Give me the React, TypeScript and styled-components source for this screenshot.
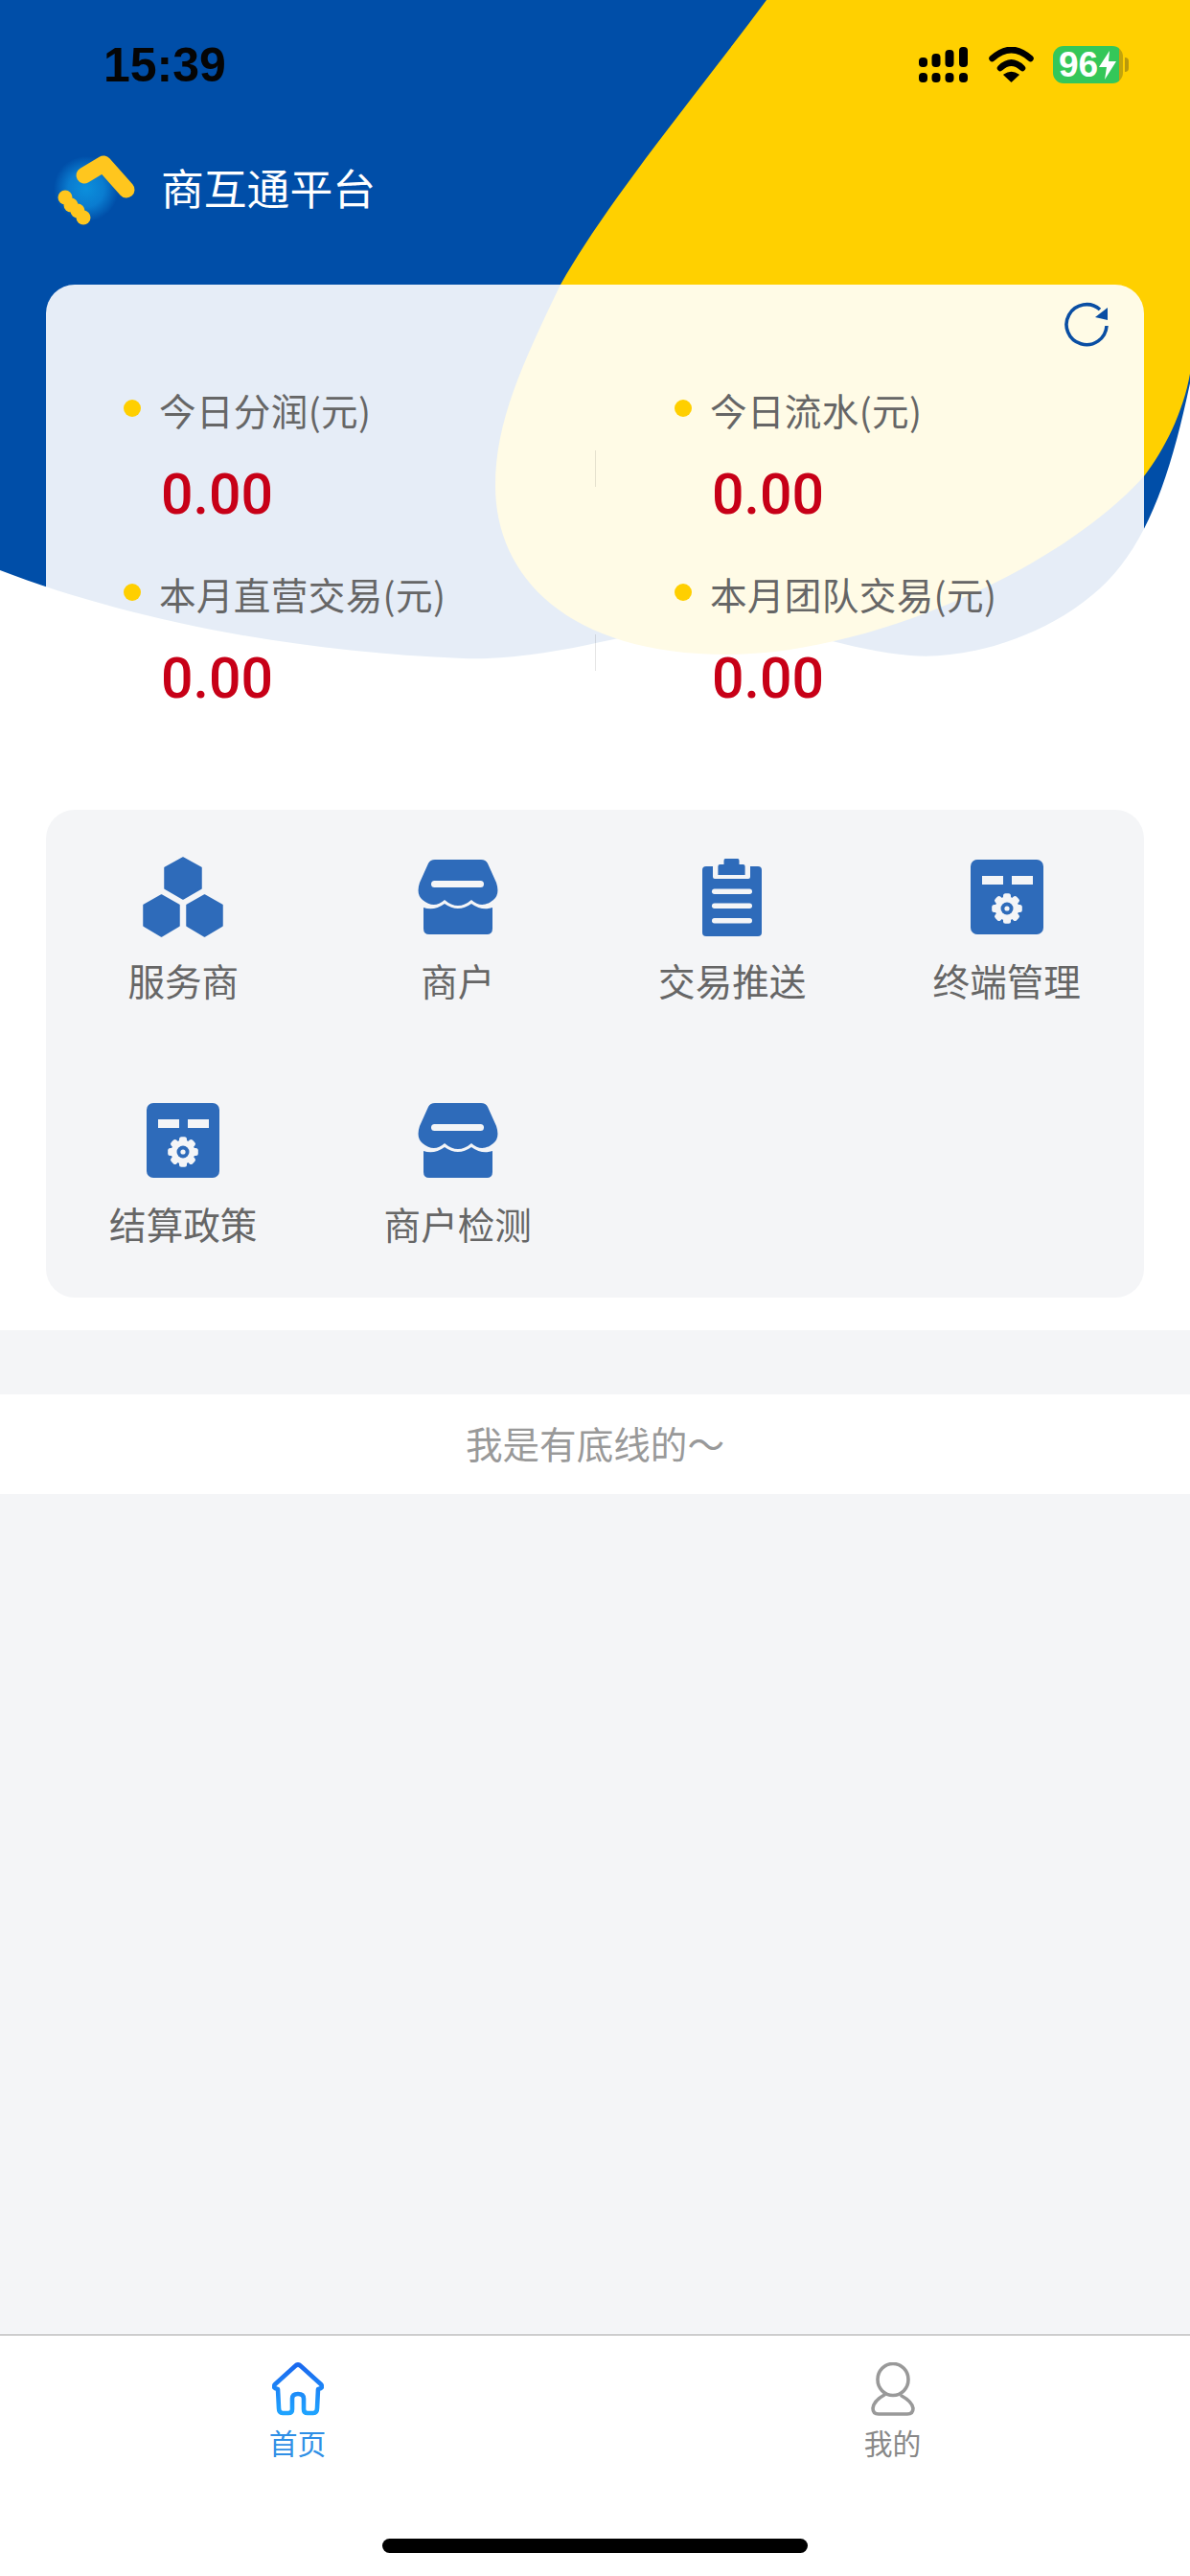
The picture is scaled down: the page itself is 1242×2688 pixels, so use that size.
import React from "react";
import styled, { createGlobalStyle } from "styled-components";

const Global = createGlobalStyle`
  html, body { margin: 0; padding: 0; background: #fff; }
  * { box-sizing: border-box; }
`;

const CJK = `"Noto Sans CJK SC", "Noto Sans", sans-serif`;

const BLUE = "#2e6bba";
const BG = "#f4f5f7";

const Page = styled.div`
  position: relative;
  width: 1242px;
  height: 2688px;
  display: flex;
  flex-direction: column;
  background: ${BG};
  font-family: ${CJK};
  overflow: hidden;
`;

const Hero = styled.section`
  position: relative;
  background: #fff;
  padding-bottom: 34px;
`;

const HeroArt = styled.svg`
  position: absolute;
  left: 0;
  top: 0;
  z-index: 0;
`;

const HeroContent = styled.div`
  position: relative;
  z-index: 1;
  display: flex;
  flex-direction: column;
`;

const StatusBar = styled.div`
  height: 135px;
  display: flex;
  align-items: center;
  padding: 0 70px 0 108px;
`;

const Time = styled.div`
  font-family: "Liberation Sans", Arial, sans-serif;
  font-weight: 700;
  font-size: 50px;
  line-height: 1;
  color: #050505;
  margin-right: auto;
`;

const StatusIcon = styled.svg<{ $gap: number }>`
  display: block;
  margin-right: ${(p) => p.$gap}px;
`;

const Battery = styled.div`
  position: relative;
  width: 73px;
  height: 39px;
  border-radius: 11px;
  background: linear-gradient(90deg, #34c759 94%, #c2a40c 94%);
  display: flex;
  align-items: center;
  padding-left: 6px;
  color: #fff;
  font-family: "Liberation Sans", Arial, sans-serif;
  font-weight: 700;
  font-size: 37px;
  line-height: 1;

  &::after {
    content: "";
    position: absolute;
    right: -6px;
    top: 12px;
    width: 4px;
    height: 15px;
    border-radius: 0 4px 4px 0;
    background: #b9990c;
  }
`;

const TitleRow = styled.div`
  height: 125px;
  display: flex;
  align-items: center;
  padding-left: 40px;
`;

const Logo = styled.svg`
  display: block;
  margin-top: -5px;
`;

const Title = styled.h1`
  margin: 0 0 0 8px;
  padding-bottom: 6px;
  font-size: 44.8px;
  line-height: 60px;
  font-weight: 400;
  color: #fff;
`;

const StatsCard = styled.div`
  position: relative;
  margin: 37px 48px 0;
  padding-top: 103px;
  border-radius: 30px;
  background: rgba(255, 255, 255, 0.9);
  display: grid;
  grid-template-columns: 575px 1fr;
  grid-auto-rows: 192px;
`;

const Refresh = styled.svg`
  position: absolute;
  right: 36px;
  top: 18px;
`;

const StatCell = styled.div<{ $divided: boolean }>`
  position: relative;
  padding-left: 81px;

  ${(p) =>
    p.$divided &&
    `&::before {
      content: "";
      position: absolute;
      left: -2px;
      top: 70px;
      width: 1px;
      height: 38px;
      background: rgba(0, 0, 0, 0.1);
    }`}
`;

const StatLabel = styled.div`
  display: flex;
  align-items: center;
  height: 54px;
  font-size: 38.6px;
  letter-spacing: 0.35px;
  color: #666;
`;

const Dot = styled.i`
  width: 18px;
  height: 18px;
  border-radius: 50%;
  background: #ffcf00;
  margin: -2px 19px 0 0;
  flex: none;
`;

const StatValue = styled.div`
  margin: 27px 0 0 39px;
  font-family: Roboto, "Liberation Sans", sans-serif;
  font-size: 59px;
  font-weight: 500;
  line-height: 70px;
  color: #c70017;
`;

const MenuCard = styled.nav`
  margin: 61px 48px 0;
  padding: 46px 0 45px;
  height: 509px;
  border-radius: 30px;
  background: ${BG};
  display: grid;
  grid-template-columns: repeat(4, 1fr);
  row-gap: 90px;
  align-content: start;
`;

const MenuItem = styled.div`
  height: 164px;
  display: flex;
  flex-direction: column;
  align-items: center;
`;

const MenuIconBox = styled.div`
  height: 90px;
  display: flex;
  align-items: center;
  justify-content: center;
`;

const MenuLabel = styled.span`
  margin-top: 11px;
  font-size: 38.6px;
  line-height: 60px;
  color: #666;
  white-space: nowrap;
`;

const Gap = styled.div`
  height: 67px;
  background: ${BG};
`;

const EndNote = styled.div`
  height: 104px;
  padding-bottom: 5px;
  background: #fff;
  display: flex;
  align-items: center;
  justify-content: center;
  font-size: 38.6px;
  color: #999;
`;

const Filler = styled.div`
  flex: 1;
  background: ${BG};
`;

const TabBar = styled.footer`
  height: 252px;
  background: #fff;
  border-top: 1px solid #a3a3a3;
  display: flex;
  flex-direction: column;
  align-items: center;
`;

const Tabs = styled.div`
  align-self: stretch;
  display: grid;
  grid-template-columns: 1fr 1fr;
  padding-top: 28px;
`;

const Tab = styled.div`
  display: flex;
  flex-direction: column;
  align-items: center;
`;

const TabLabel = styled.span<{ $active: boolean }>`
  margin: 7px 0 3px;
  font-size: 29.8px;
  line-height: 40px;
  color: ${(p) => (p.$active ? "#2f8fe6" : "#888")};
`;

const HomeIndicator = styled.div`
  margin-top: 78px;
  width: 444px;
  height: 15px;
  border-radius: 8px;
  background: #000;
`;

const Hexagons = () => (
  <svg width="86" height="86" viewBox="0 0 86 86" fill={BLUE} stroke={BLUE} strokeWidth="1.5" strokeLinejoin="round">
    <polygon points="43,2 62,12.5 62,34 43,45 24,34 24,12.5" />
    <polygon points="20.5,41 39,51.5 39,73 20.5,84 2,73 2,51.5" />
    <polygon points="65.5,41 84,51.5 84,73 65.5,84 47,73 47,51.5" />
  </svg>
);

const Store = () => (
  <svg width="84" height="78" viewBox="0 0 84 78" fill={BLUE}>
    <path d="M18 0H66Q71 0 73 4L82 24Q86 36 79 42Q67 52 56 42Q42 54 28 42Q17 52 5 42Q-2 36 2 24L11 4Q13 0 18 0Z" />
    <rect x="14" y="22" width="55" height="7" rx="3.5" fill={BG} />
    <path d="M6 50Q17 54 28 46Q42 56 56 46Q67 54 78 50V72Q78 78 72 78H12Q6 78 6 72Z" />
  </svg>
);

const Clipboard = () => (
  <svg width="62" height="81" viewBox="0 0 62 81" fill={BLUE}>
    <path d="M4 8H58Q62 8 62 12V77Q62 81 58 81H4Q0 81 0 77V12Q0 8 4 8Z" />
    <rect x="11" y="6" width="39" height="15" rx="2" fill={BG} />
    <path d="M24 0H37Q38.5 0 38.5 2V6H42.6Q44.6 6 44.6 8V17H16.4V8Q16.4 6 18.4 6H22.5V2Q22.5 0 24 0Z" />
    <rect x="10" y="31.5" width="42" height="5.5" rx="2.7" fill={BG} />
    <rect x="10" y="46.5" width="42" height="5.5" rx="2.7" fill={BG} />
    <rect x="10" y="62" width="42" height="5.5" rx="2.7" fill={BG} />
  </svg>
);

const Terminal = () => (
  <svg width="76" height="78" viewBox="0 0 76 78">
    <rect width="76" height="78" rx="7" fill={BLUE} />
    <rect x="12" y="17" width="22" height="9" fill={BG} />
    <rect x="43" y="17" width="22" height="9" fill={BG} />
    <g transform="translate(38 51)" fill={BG}>
      {[0, 45, 90, 135, 180, 225, 270, 315].map((a) => (
        <rect key={a} x="-4" y="-15.8" width="8" height="8" rx="2.5" transform={`rotate(${a})`} />
      ))}
      <circle r="12.5" />
      <circle r="6.5" fill={BLUE} />
      <circle r="2.6" />
    </g>
  </svg>
);

const menu = [
  { label: "服务商", icon: <Hexagons /> },
  { label: "商户", icon: <Store /> },
  { label: "交易推送", icon: <Clipboard /> },
  { label: "终端管理", icon: <Terminal /> },
  { label: "结算政策", icon: <Terminal /> },
  { label: "商户检测", icon: <Store /> },
];

const stats = ["今日分润(元)", "今日流水(元)", "本月直营交易(元)", "本月团队交易(元)"];

export default function App() {
  return (
    <Page>
      <Global />
      <Hero>
        <HeroArt width="1242" height="700" viewBox="0 0 1242 700">
          <path
            fill="#004ea8"
            d="M0 0H1242V400C1225 480 1205 545 1170 590C1120 655 1020 690 950 684C880 678 820 650 740 645C660 660 570 690 483 687C300 680 130 645 0 595Z"
          />
          <path
            fill="#ffd000"
            d="M800 0C735 88 635 208 585 297C545 380 517 440 517 507C517 600 590 683 760 683C900 683 1100 600 1194 497C1215 470 1235 430 1242 390V0Z"
          />
        </HeroArt>
        <HeroContent>
          <StatusBar>
            <Time>15:39</Time>
            <StatusIcon $gap={22} width="51" height="37" viewBox="0 0 51 37" fill="#000">
              <rect x="0" y="11" width="9" height="10" rx="4" />
              <rect x="13.5" y="7" width="9" height="14" rx="4" />
              <rect x="27.5" y="3" width="9" height="18" rx="4" />
              <rect x="42" y="0" width="9" height="21" rx="4" />
              <rect x="0" y="27" width="9" height="10" rx="4" />
              <rect x="13.5" y="27" width="9" height="10" rx="4" />
              <rect x="27.5" y="27" width="9" height="10" rx="4" />
              <rect x="42" y="27" width="9" height="10" rx="4" />
            </StatusIcon>
            <StatusIcon $gap={20} width="47" height="37" viewBox="0 0 47 37" fill="none" stroke="#000">
              <path d="M3.5 12Q23.5 -6 43.5 12" strokeWidth="6.5" strokeLinecap="round" />
              <path d="M12 22Q23.5 11 35 22" strokeWidth="6.5" strokeLinecap="round" />
              <path d="M16 29Q23.5 24 31 29L23.5 36Z" fill="#000" stroke="#000" strokeWidth="1.5" strokeLinejoin="round" />
            </StatusIcon>
            <Battery>
              96
              <svg width="20" height="30" viewBox="0 0 20 30" fill="#fff">
                <path d="M12 0L1 17H9L7 30L19 11H11Z" />
              </svg>
            </Battery>
          </StatusBar>
          <TitleRow>
            <Logo width="120" height="110" viewBox="0 0 120 110">
              <defs>
                <radialGradient id="glow">
                  <stop offset="0" stopColor="#0b8fdc" />
                  <stop offset="0.55" stopColor="#0a7cd0" />
                  <stop offset="1" stopColor="#004ea8" />
                </radialGradient>
              </defs>
              <circle cx="50" cy="57" r="34" fill="url(#glow)" />
              <path d="M48 43L68 31L92 58" fill="none" stroke="#ffc61e" strokeWidth="17" strokeLinecap="round" strokeLinejoin="round" />
              <g fill="#ffc61e">
                <circle cx="28" cy="66" r="7.5" />
                <circle cx="34" cy="74" r="7.5" />
                <circle cx="41" cy="80" r="7.5" />
                <circle cx="47" cy="87" r="7.5" />
              </g>
            </Logo>
            <Title>商互通平台</Title>
          </TitleRow>
          <StatsCard>
            <Refresh width="48" height="48" viewBox="0 0 48 48" fill="none">
              <path d="M38 8A21 21 0 1 0 45 25" stroke="#0a4ea3" strokeWidth="3.6" />
              <polygon points="46,6 46,19 33,16" fill="#0a4ea3" />
            </Refresh>
            {stats.map((s, i) => (
              <StatCell key={s} $divided={i % 2 === 1}>
                <StatLabel>
                  <Dot />
                  {s}
                </StatLabel>
                <StatValue>0.00</StatValue>
              </StatCell>
            ))}
          </StatsCard>
          <MenuCard>
            {menu.map((m) => (
              <MenuItem key={m.label}>
                <MenuIconBox>{m.icon}</MenuIconBox>
                <MenuLabel>{m.label}</MenuLabel>
              </MenuItem>
            ))}
          </MenuCard>
        </HeroContent>
      </Hero>
      <Gap />
      <EndNote>我是有底线的～</EndNote>
      <Filler />
      <TabBar>
        <Tabs>
          <Tab>
            <svg width="54" height="56" viewBox="0 0 54 56" fill="none">
              <defs>
                <linearGradient id="homeStroke" gradientUnits="userSpaceOnUse" x1="27" y1="0" x2="27" y2="54">
                  <stop offset="0" stopColor="#1a66ee" />
                  <stop offset="1" stopColor="#1fa4ff" />
                </linearGradient>
              </defs>
              <path
                d="M24 4L3 23Q0 27 6 28L7 48Q7 53 11 53H17Q21 53 21 49V38Q21 33 27 33Q33 33 33 38V49Q33 53 37 53H43Q47 53 47 48L48 28Q54 27 51 23L30 4Q27 1 24 4Z"
                stroke="url(#homeStroke)"
                strokeWidth="4.6"
                strokeLinejoin="round"
              />
            </svg>
            <TabLabel $active>首页</TabLabel>
          </Tab>
          <Tab>
            <svg width="46" height="56" viewBox="0 0 46 56" fill="none" stroke="#999" strokeWidth="3.6" strokeLinecap="round">
              <ellipse cx="23" cy="18" rx="16" ry="16.5" />
              <path d="M14 34Q3 40 2 48Q2 54 8 54H38Q44 54 44 48Q43 41 32 35" />
            </svg>
            <TabLabel $active={false}>我的</TabLabel>
          </Tab>
        </Tabs>
        <HomeIndicator />
      </TabBar>
    </Page>
  );
}
